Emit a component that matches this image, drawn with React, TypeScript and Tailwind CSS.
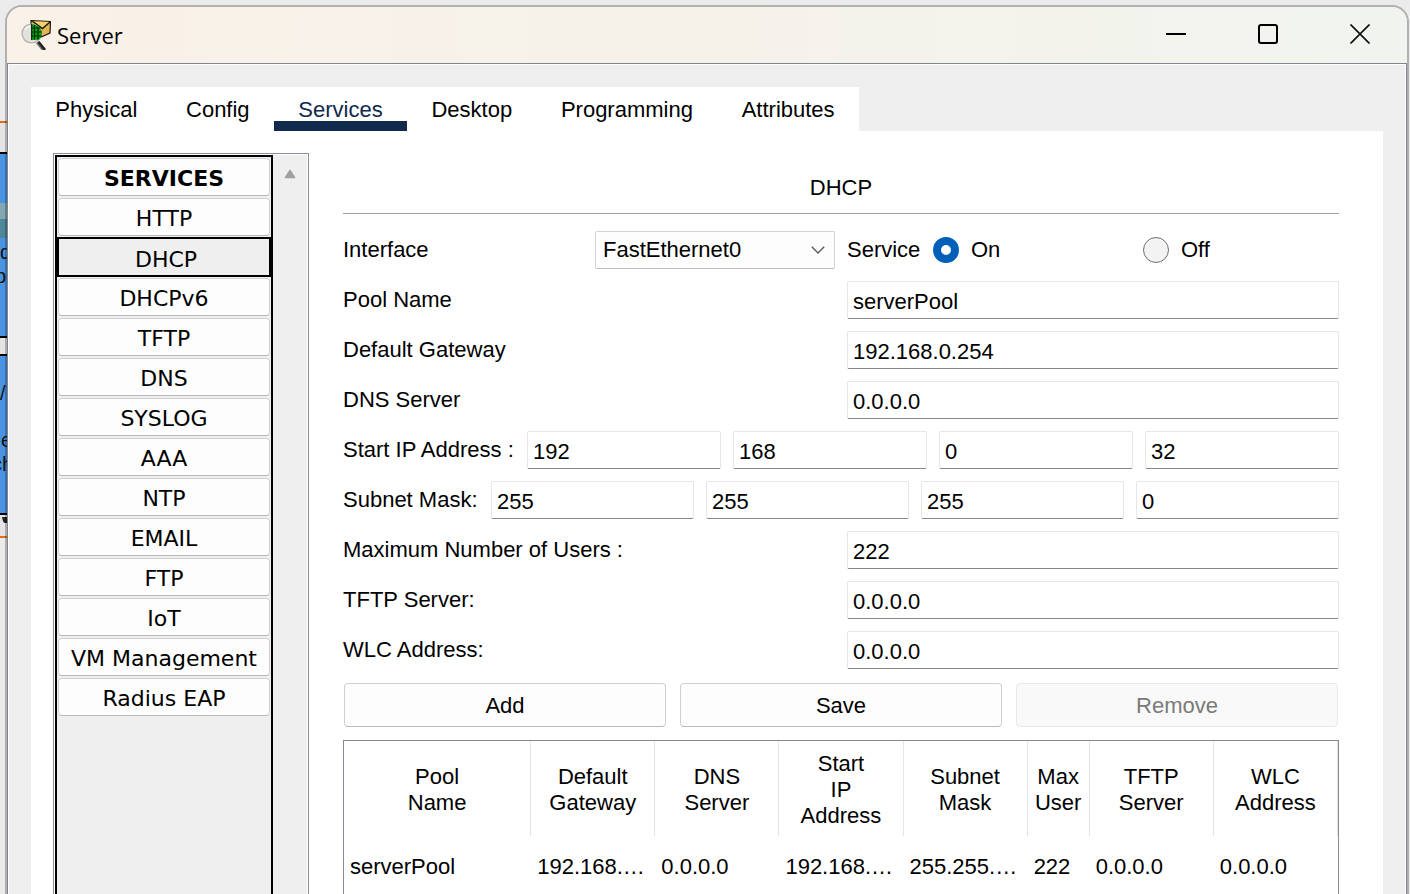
import { useState } from "react";

const TABS = ["Physical", "Config", "Services", "Desktop", "Programming", "Attributes"];

const SERVICES = [
  "HTTP",
  "DHCP",
  "DHCPv6",
  "TFTP",
  "DNS",
  "SYSLOG",
  "AAA",
  "NTP",
  "EMAIL",
  "FTP",
  "IoT",
  "VM Management",
  "Radius EAP",
];

const COLUMNS = [
  { lines: ["Pool", "Name"], width: "w-[187px]" },
  { lines: ["Default", "Gateway"], width: "w-[124px]" },
  { lines: ["DNS", "Server"], width: "w-[124px]" },
  { lines: ["Start", "IP", "Address"], width: "w-[124px]" },
  { lines: ["Subnet", "Mask"], width: "w-[124px]" },
  { lines: ["Max", "User"], width: "w-[62px]" },
  { lines: ["TFTP", "Server"], width: "w-[124px]" },
  { lines: ["WLC", "Address"], width: "w-[124px]" },
];

const POOLS = [
  ["serverPool", "192.168.…", "0.0.0.0", "192.168.…", "255.255.…", "222", "0.0.0.0", "0.0.0.0"],
];

const FIELD =
  "h-[38px] w-full min-w-0 rounded-[2px] border border-[#e6e6e6] border-b-[#868686] bg-white px-[5px] pt-[3px] outline-none";

/* Sliver of the network diagram that shows beside the window */
function Workspace() {
  return (
    <svg className="absolute left-0 top-0" width="9" height="894" aria-hidden="true">
      <rect x="0" y="121" width="9" height="417" fill="#e66a16" />
      <rect x="0" y="123" width="9" height="413" fill="#e4e4e4" />
      <rect x="0" y="152" width="9" height="186" fill="#000" />
      <rect x="0" y="154" width="9" height="182" fill="#4a94e2" />
      <rect x="0" y="203" width="9" height="16" fill="#82a6b2" />
      <rect x="0" y="219" width="9" height="19" fill="#4c8899" />
      <rect x="0" y="354" width="9" height="161" fill="#000" />
      <rect x="0" y="356" width="9" height="157" fill="#4a94e2" />
      <path d="M2 517h7v6H5q-2 0-3-6z" fill="#222" />
      <g fontFamily="Liberation Sans, sans-serif" fontSize="20" fill="#111">
        <text x="0" y="259">d</text>
        <text x="-5" y="283">p</text>
        <text x="0" y="400">/</text>
        <text x="1" y="447">e</text>
        <text x="-8" y="471">ch</text>
      </g>
    </svg>
  );
}

function AppIcon() {
  return (
    <svg width="30" height="30" viewBox="0 0 30 30" aria-hidden="true">
      <path d="M10 0.7 29.500 1.500 29 13 18 18 10.500 18z" fill="#e2b655" stroke="#1d1608" strokeWidth="1.2" />
      <path d="M11.500 1.200 21.500 8.500 29 2" fill="#f3cf72" stroke="#1d1608" strokeWidth="1.4" />
      <path d="M16.500 22 23 30" stroke="#77777a" strokeWidth="4" />
      <path d="M17.500 22 24 30" stroke="#222" strokeWidth="2.600" />
      <circle cx="10.500" cy="13.500" r="9.400" fill="#e2e1dc" stroke="#b4b3ae" strokeWidth="1.400" />
      <path d="M10.200 4.200c7 0 10.600 4.400 10.600 9.100 0 2.800-1 5-2.800 6.400l-7.800 0.300z" fill="#0b9a16" />
      <path
        d="M13.500 5v14.500M17 6.500v13M10.200 8h9M10.200 12h10.600M10.200 16h10.400M10.600 4v16"
        stroke="#06300a"
        strokeWidth="1.200"
      />
      <path d="M4 10c1-2 3-3.500 5-3.800" stroke="#fafaf6" strokeWidth="1.400" fill="none" />
    </svg>
  );
}

function TitleBar() {
  const button = "flex h-full w-[92px] items-center justify-center";
  return (
    <header className="flex h-[56px] shrink-0 items-center bg-linear-to-r from-[#faf1e8] via-[#f5f2ea] to-[#f1f4ee] pl-3.5">
      <AppIcon />
      <h1 className="ml-1.5 flex-1 font-['Open_Sans',sans-serif] text-[22px] leading-[30px]">Server</h1>
      <div className="flex h-full pb-0.5 pr-px">
        <button aria-label="Minimize" className={button}>
          <svg width="20" height="20" viewBox="0 0 20 20">
            <path d="M0 10h20" stroke="#000" strokeWidth="2" />
          </svg>
        </button>
        <button aria-label="Maximize" className={button}>
          <svg width="20" height="20" viewBox="0 0 20 20">
            <rect x="1" y="1" width="18" height="18" rx="2" fill="none" stroke="#000" strokeWidth="2" />
          </svg>
        </button>
        <button aria-label="Close" className={button}>
          <svg width="20" height="20" viewBox="0 0 20 20">
            <path d="M0.500 0.500 19.500 19.500M19.500 0.500 0.500 19.500" stroke="#111" strokeWidth="1.700" />
          </svg>
        </button>
      </div>
    </header>
  );
}

function ServiceList() {
  const [current, setCurrent] = useState("DHCP");
  const item =
    "flex h-[38px] shrink-0 items-center justify-center rounded-[4px] border border-[#d2d2d2] border-b-[#b9b9b9] bg-[#fdfdfd] pt-1";
  return (
    <nav
      aria-label="Services"
      className="flex w-[256px] shrink-0 border border-b-0 border-[#8b8f97] bg-white p-px pb-0 font-['DejaVu_Sans',sans-serif]"
    >
      <div className="flex w-[218px] flex-col gap-0.5 border-2 border-b-0 border-black bg-[#efefef] p-px">
        <h2 className={item + " font-bold"}>SERVICES</h2>
        {SERVICES.map((name) => (
          <button
            key={name}
            onClick={() => setCurrent(name)}
            className={
              name === current
                ? "-m-px flex h-10 shrink-0 items-center justify-center border-2 border-black bg-[#efefef] pl-1 pt-1.5"
                : item
            }
          >
            {name}
          </button>
        ))}
      </div>
      <div className="flex flex-1 justify-center bg-[#efefef] pt-3.5">
        <svg width="12" height="10" viewBox="0 0 12 10" aria-hidden="true">
          <path d="M6 1.500 10.500 8.500h-9z" fill="#a0a0a0" stroke="#a0a0a0" strokeWidth="1.500" strokeLinejoin="round" />
        </svg>
      </div>
    </nav>
  );
}

function Field({ id, label, value }: { id: string; label: string; value: string }) {
  return (
    <div className="grid grid-cols-[504px_1fr] items-center">
      <label htmlFor={id}>{label}</label>
      <input id={id} className={FIELD} defaultValue={value} />
    </div>
  );
}

function Octets({ label, labelWidth, values }: { label: string; labelWidth: string; values: string[] }) {
  return (
    <div role="group" aria-label={label} className="flex items-center">
      <span className={"shrink-0 whitespace-nowrap " + labelWidth}>{label}</span>
      <div className="grid flex-1 grid-cols-4 gap-3">
        {values.map((value, i) => (
          <input key={i} aria-label={`${label} ${i + 1}`} className={FIELD} defaultValue={value} />
        ))}
      </div>
    </div>
  );
}

function PoolTable() {
  return (
    <div className="mt-[13px] flex-1 border border-b-0 border-[#858a94]">
      <table className="w-full table-fixed border-separate border-spacing-0">
        <thead>
          <tr className="h-[95px]">
            {COLUMNS.map((col) => (
              <th
                key={col.lines.join(" ")}
                className={"border-r border-[#e4e4e4] px-0 pb-0 pt-0.5 text-center align-middle font-normal " + col.width}
              >
                {col.lines.map((line) => (
                  <span key={line} className="block">
                    {line}
                  </span>
                ))}
              </th>
            ))}
          </tr>
        </thead>
        <tbody>
          {POOLS.map((row) => (
            <tr key={row[0]} className="h-[60px]">
              {row.map((cell, i) => (
                <td key={i} className="whitespace-nowrap px-1.5 pb-0 pt-0.5 align-middle">
                  {cell}
                </td>
              ))}
            </tr>
          ))}
        </tbody>
      </table>
    </div>
  );
}

function DhcpPanel() {
  const button = "h-11 flex-1 rounded-[4px] border border-[#d0d0d0] border-b-[#bababa] bg-[#fdfdfd] pt-0.5";
  return (
    <section className="flex min-w-0 flex-1 flex-col">
      <h2 className="border-b border-[#a0a0a0] pb-3 pt-[22px] text-center">DHCP</h2>
      <form className="mt-[17px] flex flex-col gap-3" onSubmit={(e) => e.preventDefault()}>
        <div className="grid grid-cols-[504px_1fr] items-center">
          <div className="flex items-center justify-between pr-3">
            <label htmlFor="interface">Interface</label>
            <div className="relative">
              <select
                id="interface"
                className="h-[38px] w-[240px] appearance-none rounded-[2px] border border-[#d4d4d4] border-b-[#bcbcbc] bg-[#fdfdfd] pl-[7px] outline-none"
              >
                <option>FastEthernet0</option>
              </select>
              <svg
                className="pointer-events-none absolute right-2.5 top-3.5"
                width="14"
                height="10"
                viewBox="0 0 14 10"
                aria-hidden="true"
              >
                <path d="M0.800 1.800 7 8l6.200-6.200" fill="none" stroke="#555" strokeWidth="1.300" />
              </svg>
            </div>
          </div>
          <div role="radiogroup" aria-label="Service" className="flex items-center">
            <span className="w-[86px]">Service</span>
            <label className="flex w-[210px] items-center gap-3">
              <input
                type="radio"
                name="service"
                defaultChecked
                className="size-[26px] appearance-none rounded-full border border-[#707070] bg-[#f3f3f3] checked:border-8 checked:border-[#005fb8] checked:bg-white"
              />
              On
            </label>
            <label className="flex items-center gap-3">
              <input
                type="radio"
                name="service"
                className="size-[26px] appearance-none rounded-full border border-[#707070] bg-[#f3f3f3] checked:border-8 checked:border-[#005fb8] checked:bg-white"
              />
              Off
            </label>
          </div>
        </div>
        <Field id="pool" label="Pool Name" value="serverPool" />
        <Field id="gateway" label="Default Gateway" value="192.168.0.254" />
        <Field id="dns" label="DNS Server" value="0.0.0.0" />
        <Octets label="Start IP Address :" labelWidth="w-[184px]" values={["192", "168", "0", "32"]} />
        <Octets label="Subnet Mask:" labelWidth="w-[148px]" values={["255", "255", "255", "0"]} />
        <Field id="users" label="Maximum Number of Users :" value="222" />
        <Field id="tftp" label="TFTP Server:" value="0.0.0.0" />
        <Field id="wlc" label="WLC Address:" value="0.0.0.0" />
        <div className="mt-0.5 flex gap-3.5 px-px">
          <button className={button}>Add</button>
          <button className={button}>Save</button>
          <button disabled className="h-11 flex-1 rounded-[4px] border border-[#e9e9e9] bg-[#f9f9f9] pt-0.5 text-[#7a7a7a]">
            Remove
          </button>
        </div>
      </form>
      <PoolTable />
    </section>
  );
}

export default function App() {
  const [tab, setTab] = useState("Services");
  return (
    <div className="relative flex h-screen flex-col overflow-hidden bg-[#ebebeb] pl-[5px] pr-px pt-[5px] font-['Liberation_Sans',Arial,sans-serif] text-[22px] leading-[26px] text-black">
      <Workspace />
      <div className="relative flex min-h-0 flex-1 flex-col overflow-hidden rounded-t-[17px] border-2 border-b-0 border-black/25">
        <TitleBar />
        <main className="flex min-h-0 flex-1 border border-b-0 border-[#7f848f] bg-white p-px pb-0">
          <div className="flex min-w-0 flex-1 flex-col bg-[#efefef] px-[22px] pt-[22px]">
            <div role="tablist" className="flex h-11 w-[828px] shrink-0 bg-white">
              {TABS.map((name) => (
                <button
                  key={name}
                  role="tab"
                  aria-selected={name === tab}
                  onClick={() => setTab(name)}
                  className={
                    name === tab
                      ? "grow border-b-[10px] border-[#10294d] px-6 pt-2.5 text-[#10294d]"
                      : "grow border-b-[10px] border-transparent px-6 pt-2.5"
                  }
                >
                  {name}
                </button>
              ))}
            </div>
            <div className="flex min-h-0 flex-1 gap-[34px] bg-white pl-[22px] pr-11 pt-[22px]">
              <ServiceList />
              <DhcpPanel />
            </div>
          </div>
        </main>
      </div>
    </div>
  );
}
